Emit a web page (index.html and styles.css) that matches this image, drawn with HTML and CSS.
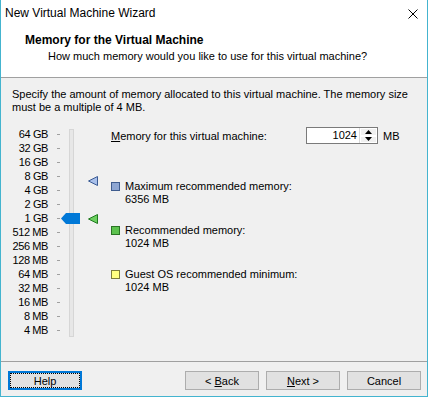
FILE: index.html
```html
<!DOCTYPE html>
<html lang="en">
<head>
  <meta charset="UTF-8">
  <title>New Virtual Machine Wizard</title>
  <link rel="stylesheet" href="styles.css">
</head>
<body>
  <div class="window">
    <div class="top">
      <div class="titlebar">
        <span class="title">New Virtual Machine Wizard</span>
        <svg class="close" width="10" height="10" viewBox="0 0 10 10"><path d="M0.5 0.5L9.5 9.5M9.5 0.5L0.5 9.5" stroke="#000" stroke-width="1"/></svg>
      </div>
      <div class="header">
        <h1>Memory for the Virtual Machine</h1>
        <p>How much memory would you like to use for this virtual machine?</p>
      </div>
    </div>

    <div class="content">
      <p class="intro">Specify the amount of memory allocated to this virtual machine. The memory size<br>must be a multiple of 4 MB.</p>

      <div class="main">
        <div class="scale">
          <div class="levels">
            <div class="level"><span>64 GB</span><i class="tick"></i></div>
            <div class="level"><span>32 GB</span><i class="tick"></i></div>
            <div class="level"><span>16 GB</span><i class="tick"></i></div>
            <div class="level"><span>8 GB</span><i class="tick"></i></div>
            <div class="level"><span>4 GB</span><i class="tick"></i></div>
            <div class="level"><span>2 GB</span><i class="tick"></i></div>
            <div class="level"><span>1 GB</span><i class="tick"></i></div>
            <div class="level"><span>512 MB</span><i class="tick"></i></div>
            <div class="level"><span>256 MB</span><i class="tick"></i></div>
            <div class="level"><span>128 MB</span><i class="tick"></i></div>
            <div class="level"><span>64 MB</span><i class="tick"></i></div>
            <div class="level"><span>32 MB</span><i class="tick"></i></div>
            <div class="level"><span>16 MB</span><i class="tick"></i></div>
            <div class="level"><span>8 MB</span><i class="tick"></i></div>
            <div class="level"><span>4 MB</span><i class="tick"></i></div>
          </div>
          <div class="track"></div>

          <svg class="thumb" width="19" height="11" viewBox="0 0 19 11" style="top: 86px"><polygon points="0,5.5 5,0 19,0 19,11 5,11" fill="#0078d7"/></svg>
          <svg class="marker" width="10" height="10" viewBox="0 0 10 10" style="top: 49px"><polygon points="0.5,5 9.5,0.5 9.5,9.5" fill="#a9c0ea" stroke="#3b5b94"/></svg>
          <svg class="marker" width="10" height="10" viewBox="0 0 10 10" style="top: 87px"><polygon points="0.5,5 9.5,0.5 9.5,9.5" fill="#6ccf5f" stroke="#1f7a1f"/></svg>
        </div>

        <div class="panel">
          <div class="mem-row">
            <label class="mem-label"><u>M</u>emory for this virtual machine:</label>
            <div class="spin">
              <span class="spin-value">1024</span>
              <div class="spin-buttons">
                <span class="spin-btn"><svg width="7" height="4" viewBox="0 0 7 4"><polygon points="3.5,0 7,4 0,4" fill="#000"/></svg></span>
                <span class="spin-btn"><svg width="7" height="4" viewBox="0 0 7 4"><polygon points="0,0 7,0 3.5,4" fill="#000"/></svg></span>
              </div>
            </div>
            <span class="unit">MB</span>
          </div>

          <div class="legend">
            <div class="legend-item">
              <i class="swatch max"></i>
              <div>Maximum recommended memory:<br>6356 MB</div>
            </div>
            <div class="legend-item">
              <i class="swatch rec"></i>
              <div>Recommended memory:<br>1024 MB</div>
            </div>
            <div class="legend-item">
              <i class="swatch min"></i>
              <div>Guest OS recommended minimum:<br>1024 MB</div>
            </div>
          </div>
        </div>
      </div>
    </div>

    <div class="footer">
      <button class="btn default"><span class="focus">Help</span></button>
      <div class="spacer"></div>
      <button class="btn">&lt; <u>B</u>ack</button>
      <button class="btn"><u>N</u>ext &gt;</button>
      <button class="btn">Cancel</button>
    </div>
  </div>
</body>
</html>
```

FILE: styles.css
```css
body {
  margin: 0;
  font-family: "Liberation Sans", Arial, sans-serif;
  font-size: 11px;
  color: #000;
  background: #fff;
}
.window {
  width: 428px;
  height: 397px;
  box-sizing: border-box;
  border: 1px solid #44b4cf;
  border-top: 0;
  background: #f0f0f0;
  display: flex;
  flex-direction: column;
}

/* title + header */
.top {
  height: 78px;
  box-sizing: border-box;
  background: #fff;
  border-bottom: 1px solid #a0a0a0;
}
.titlebar {
  height: 26px;
  display: flex;
  align-items: center;
  justify-content: space-between;
  padding: 0 9px 0 4px;
}
.title {
  font-size: 12px;
}
.close {
  margin-top: 1px;
}
.header {
  padding: 7px 0 0 24px;
}
.header h1 {
  margin: 0;
  font-size: 12px;
  line-height: 14px;
  font-weight: bold;
}
.header p {
  margin: 2px 0 0 23px;
  line-height: 14px;
}

/* content */
.content {
  flex: 1;
  padding-top: 10px;
}
.intro {
  margin: 0 0 0 11px;
  line-height: 13px;
}
.main {
  display: flex;
  margin-top: 13px;
  padding-left: 3px;
}
.scale {
  position: relative;
  display: flex;
  width: 107px;
}
.levels {
  display: flex;
  flex-direction: column;
}
.level {
  display: flex;
  align-items: center;
  height: 14px;
}
.level span {
  width: 44px;
  text-align: right;
  letter-spacing: -0.4px;
}
.tick {
  width: 3px;
  height: 1px;
  margin-left: 9px;
  background: #a0a0a0;
}
.track {
  width: 3px;
  height: 206px;
  margin: 2px 0 0 9px;
  background: #e7e7e7;
  border: 1px solid #d6d6d6;
}
.thumb {
  position: absolute;
  left: 57px;
}
.marker {
  position: absolute;
  left: 84px;
}

.panel {
  flex: 1;
}
.mem-row {
  display: flex;
  align-items: center;
  height: 17px;
}
.mem-label {
  width: 195px;
}
.spin {
  display: flex;
  width: 72px;
  height: 17px;
  box-sizing: border-box;
  border: 1px solid #7a7a7a;
  background: #fff;
}
.spin-value {
  flex: 1;
  text-align: right;
  line-height: 15px;
  padding-right: 2px;
}
.spin-buttons {
  display: flex;
  flex-direction: column;
  width: 17px;
  border-left: 1px solid #d9d9d9;
}
.spin-btn {
  flex: 1;
  display: flex;
  align-items: center;
  justify-content: center;
  background: #f0f0f0;
  border: 1px solid #fff;
}
.unit {
  margin-left: 5px;
}

.legend {
  display: flex;
  flex-direction: column;
  gap: 18px;
  margin-top: 36px;
}
.legend-item {
  display: flex;
  line-height: 13px;
}
.swatch {
  width: 9px;
  height: 9px;
  box-sizing: border-box;
  margin: 2px 5px 0 0;
  border: 1px solid;
}
.swatch.max {
  background: #8ea6d2;
  border-color: #3f5c8e;
}
.swatch.rec {
  background: #5cc24e;
  border-color: #2a7424;
}
.swatch.min {
  background: #ffff80;
  border-color: #7c7c3a;
}

/* buttons */
.footer {
  height: 35px;
  box-sizing: border-box;
  display: flex;
  gap: 7px;
  padding: 9px 6px 0 7px;
  border-top: 1px solid #a0a0a0;
}
.spacer {
  flex: 1;
}
.btn {
  width: 74px;
  height: 19px;
  padding: 0;
  font-family: inherit;
  font-size: 11px;
  color: #000;
  background: #e1e1e1;
  border: 1px solid #adadad;
}
.btn.default {
  border: 2px solid #0078d7;
  display: flex;
  padding: 1px;
}
.focus {
  flex: 1;
  display: flex;
  align-items: center;
  justify-content: center;
  outline: 1px dotted #000;
}
```
